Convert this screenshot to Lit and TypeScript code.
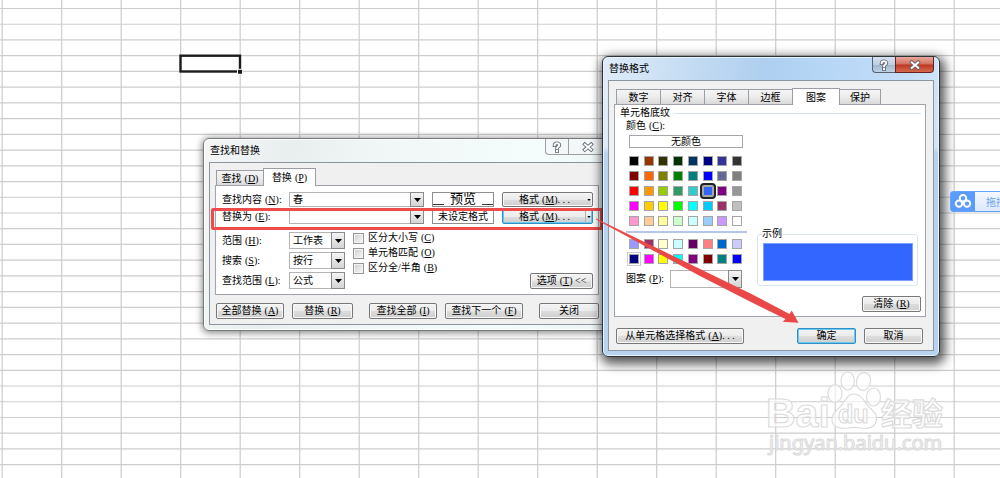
import { LitElement, html, svg, css, nothing } from "lit";
import { customElement, property } from "lit/decorators.js";
import { classMap } from "lit/directives/class-map.js";

const controls = css`
  * { box-sizing: border-box; }
  :host, button, input, select, legend {
    font: 10px/12px "Liberation Serif", "Noto Sans CJK SC", sans-serif;
    color: #000;
  }
  .key { margin-left: 3px; white-space: nowrap; }
  button { padding: 0; margin: 0; }
  .btn {
    height: 16px;
    border: 1px solid #777;
    border-radius: 2px;
    background: linear-gradient(#f3f3f3, #ebebeb 50%, #dddddd 51%, #cfcfcf);
    box-shadow: inset 0 0 0 1px #f8f8f8;
    line-height: 14px;
    text-align: center;
    white-space: nowrap;
  }
  .btn.default { border-color: #2c91c4; box-shadow: inset 0 0 0 1px #6cc8f0; }
  .field { position: relative; display: flex; height: 17px; }
  .field input, .field select {
    appearance: none;
    flex: 1;
    min-width: 0;
    width: 100%;
    margin: 0;
    padding: 0 16px 0 3px;
    border: 1px solid #b4b4b4;
    border-radius: 0;
    background: #fff;
    outline: none;
  }
  .field.low { height: 15px; }
  .drop {
    position: absolute;
    right: 0;
    top: 0;
    bottom: 0;
    width: 14px;
    display: grid;
    place-items: center;
    border: 1px solid #8a8a8a;
    background: linear-gradient(#f4f4f4, #d4d4d4);
    pointer-events: none;
  }
  .drop svg { width: 7px; height: 4px; display: block; }
  .tabs { display: flex; align-items: flex-end; }
  .tab {
    height: 15px;
    border: 1px solid #9a9da6;
    border-bottom: 0;
    border-right-width: 0;
    background: linear-gradient(#f4f4f4, #ececec 50%, #dadada);
    line-height: 15px;
    text-align: center;
    white-space: nowrap;
  }
  .tab:last-child { border-right-width: 1px; }
  .tab.on {
    position: relative;
    height: 18px;
    margin-bottom: -1px;
    border-right-width: 1px;
    background: #fff;
  }
  .panel { border: 1px solid #a0a3ac; background: #fff; }
`;

const key = (k: string, tail = "") => html`<span class="key">(<u>${k}</u>)${tail}</span>`;
const arrow = html`<svg viewBox="0 0 7 4"><path d="M0 0h7L3.5 4z" fill="#000" /></svg>`;

@customElement("spread-sheet")
class SpreadSheet extends LitElement {
  static styles = css`
    :host { display: block; }
    svg { display: block; width: 100%; height: 100%; }
    .line { stroke: #cdcdcd; stroke-width: 1.2; }
    .cursor { fill: none; stroke: #1c1c1c; stroke-width: 2.4; }
  `;

  render() {
    const cols = Array.from({ length: 40 }, (_, i) => 2.2 + i * 59.5);
    const rows = Array.from({ length: 80 }, (_, i) => 8.5 + i * 15.73);
    return html`<svg aria-hidden="true">
      ${cols.map((x) => svg`<line class="line" x1=${x} x2=${x} y1="0" y2="100%" />`)}
      ${rows.map((y) => svg`<line class="line" y1=${y} y2=${y} x1="0" x2="100%" />`)}
      <rect class="cursor" x="180.5" y="55.7" width="59.5" height="15.8" />
      <rect x="237" y="68.8" width="5.5" height="5.5" fill="#fff" />
      <rect x="238" y="69.8" width="4" height="4" fill="#1c1c1c" />
    </svg>`;
  }
}

@customElement("glass-window")
class GlassWindow extends LitElement {
  @property() heading = "";
  @property({ type: Boolean, reflect: true }) active = false;

  static styles = css`
    * { box-sizing: border-box; }
    :host {
      display: block;
      box-sizing: border-box;
      padding: 0 5px 5px;
      border: 1px solid #777b7e;
      border-radius: 6px;
      background: linear-gradient(100deg, #f4f6f6, #e9eeee 20%, #f2f7f7 45%, #f4fcfc 75%, #eef3f3);
      box-shadow: inset 0 0 0 1px #fff, 0 1px 7px 1px #0007;
      font: 10px/12px "Noto Sans CJK SC", sans-serif;
    }
    :host([active]) {
      border-color: #2e3338;
      background:
        linear-gradient(#fff0 90px, #b8d3ef 96px),
        linear-gradient(95deg, #e0ecf8, #c7ddf3 22%, #aecfef 45%, #b6d6f6 60%, #c1dcf8 80%, #d4e8fc);
      box-shadow: inset 0 0 0 1px #e6f4ff, 2px 4px 11px 3px #000a;
    }
    header { display: flex; justify-content: space-between; height: 23px; }
    h2 { margin: 0; padding: 5px 0 0 1px; font: inherit; }
    .buttons { display: flex; height: 16px; }
    button {
      display: grid;
      place-items: center;
      width: 23px;
      padding: 0;
      border: 1px solid #9b9fa3;
      border-top: 0;
      border-right: 0;
      border-radius: 0 0 0 4px;
      background: #f4f7f8;
    }
    button + button { width: 39px; border-right: 1px solid #9b9fa3; border-radius: 0 0 4px 0; }
    :host([active]) button {
      border-color: #56616f;
      background: linear-gradient(#d5e2f0, #bccfe3 50%, #9eb5cd 51%, #bed3e8);
    }
    :host([active]) button + button {
      border-color: #622;
      background: linear-gradient(#e9a89c, #d3705d 48%, #bd3822 52%, #d4694b);
    }
    svg { width: 12px; height: 12px; display: block; }
    .edge { fill: none; stroke: #5d636c; stroke-width: 3.6; stroke-linecap: square; }
    .ink { fill: none; stroke: #fff; stroke-width: 1.9; stroke-linecap: square; }
    .body { border: 1px solid #8b959f; background: #f0f0f0; }
  `;

  render() {
    const q = "M3.6 4.2C3.6 1.6 8.4 1.6 8.4 4C8.4 5.6 6 5.6 6 7.2M6 10v0.2";
    const x = "M2.8 3.4l6.4 5.4M9.2 3.4L2.8 8.8";
    const icon = (d: string) => html`<svg viewBox="0 0 12 12"><path class="edge" d=${d} /><path class="ink" d=${d} /></svg>`;
    return html`
      <header>
        <h2>${this.heading}</h2>
        <div class="buttons">
          <button aria-label="帮助">${icon(q)}</button>
          <button aria-label="关闭窗口">${icon(x)}</button>
        </div>
      </header>
      <div class="body"><slot></slot></div>
    `;
  }
}

@customElement("find-replace")
class FindReplace extends LitElement {
  static styles = [
    controls,
    css`
      :host { display: block; padding: 5px 7px 5px 5px; }
      .tab { width: 47px; margin-left: 1px; }
      .tab.on { width: 53px; margin-left: 0; }
      .panel { padding: 6px 5px 5px 6px; }
      .query {
        display: grid;
        grid-template-columns: 67px 1fr 62px 91px;
        gap: 2px 8px;
        align-items: center;
      }
      .query label { margin-right: -8px; white-space: nowrap; }
      .query .field { margin-left: -8px; }
      .preview {
        height: 15px;
        border: 1px solid #8d8d8d;
        line-height: 14px;
        text-align: center;
        white-space: nowrap;
      }
      .big { display: flex; align-items: flex-end; gap: 6px; font-size: 13px; }
      .big::before, .big::after { content: ""; flex: 1; border-bottom: 1px solid #333; margin-bottom: 1px; }
      .format { position: relative; height: 15px; line-height: 13px; padding-right: 6px; }
      .format .mark {
        position: absolute;
        right: 0;
        top: 1px;
        bottom: 1px;
        width: 7px;
        display: grid;
        place-items: center;
      }
      .format.default .mark { border-left: 1px solid #a5b5bd; }
      .mark svg { width: 4px; height: 2px; }
      .lower { display: flex; margin-top: 8px; }
      .scope { display: grid; grid-template-columns: 67px 56px; gap: 3px 0; align-items: center; }
      .checks { display: flex; flex-direction: column; gap: 3px; margin-left: 8px; }
      .checks label { display: flex; align-items: center; gap: 4px; height: 12px; white-space: nowrap; }
      .checks input {
        appearance: none;
        width: 11px;
        height: 11px;
        margin: 0;
        border: 1px solid #979797;
        background: linear-gradient(135deg, #c9cdd0, #fafafa);
        box-shadow: inset 0 0 0 1px #f4f4f4;
      }
      .options { width: 63px; margin: auto 0 0 auto; }
      .actions { display: flex; gap: 16px; margin: 8px 0 0 1px; }
      .pair { display: flex; gap: 8px; }
      .w60 { width: 61px; }
      .w68 { width: 68px; }
      .w78 { width: 78px; }
    `,
  ];

  private query(id: string, label: string, k: string, value: string, preview: unknown, on: boolean) {
    return html`
      <label for=${id}>${label}${key(k, ":")}</label>
      <div class="field low"><input id=${id} .value=${value} /><span class="drop">${arrow}</span></div>
      ${preview}
      <button class=${classMap({ btn: true, format: true, default: on })}>
        格式${key("M", ". . .")}<span class="mark">${arrow}</span>
      </button>
    `;
  }

  private scope(id: string, label: string, k: string, value: string) {
    return html`
      <label for=${id}>${label}${key(k, ":")}</label>
      <div class="field"><select id=${id}><option>${value}</option></select><span class="drop">${arrow}</span></div>
    `;
  }

  render() {
    return html`
      <div class="tabs" role="tablist">
        <button class="tab" role="tab">查找${key("D")}</button>
        <button class="tab on" role="tab" aria-selected="true">替换${key("P")}</button>
      </div>
      <div class="panel">
        <div class="query">
          ${this.query("find", "查找内容", "N", "春", html`<div class="preview big">预览</div>`, false)}
          ${this.query("repl", "替换为", "E", "", html`<div class="preview">未设定格式</div>`, true)}
        </div>
        <div class="lower">
          <div class="scope">
            ${this.scope("within", "范围", "H", "工作表")}
            ${this.scope("order", "搜索", "S", "按行")}
            ${this.scope("look", "查找范围", "L", "公式")}
          </div>
          <div class="checks">
            <label><input type="checkbox" /><span>区分大小写${key("C")}</span></label>
            <label><input type="checkbox" /><span>单元格匹配${key("O")}</span></label>
            <label><input type="checkbox" /><span>区分全/半角${key("B")}</span></label>
          </div>
          <button class="btn options">选项${key("T", " <<")}</button>
        </div>
      </div>
      <div class="actions">
        <div class="pair">
          <button class="btn w68">全部替换${key("A")}</button>
          <button class="btn w60">替换${key("R")}</button>
        </div>
        <div class="pair">
          <button class="btn w68">查找全部${key("I")}</button>
          <button class="btn w78">查找下一个${key("F")}</button>
        </div>
        <button class="btn w60">关闭</button>
      </div>
    `;
  }
}

const PALETTE = `000000 993300 333300 003300 003366 000080 333399 333333
  800000 ff6600 808000 008000 008080 0000ff 666699 808080
  ff0000 ff9900 99cc00 339966 33cccc 3366ff 800080 969696
  ff00ff ffcc00 ffff00 00ff00 00ffff 00ccff 993366 c0c0c0
  ff99cc ffcc99 ffff99 ccffcc ccffff 99ccff cc99ff ffffff`.split(/\s+/);
const CHART = `9999ff 993366 ffffcc ccffff 660066 ff8080 0066cc ccccff
  000080 ff00ff ffff00 00ffff 800080 800000 008080 0000ff`.split(/\s+/);

@customElement("cell-format")
class CellFormat extends LitElement {
  static styles = [
    controls,
    css`
      :host { display: block; padding: 7px 7px 6px 5px; }
      .tabs { padding-left: 2px; }
      .tab { width: 44px; }
      .tab.on { width: 48px; height: 17px; }
      .tab:last-child { width: 41px; border-left: 0; }
      .panel { padding: 2px 4px 4px 5px; }
      .title { display: flex; align-items: center; gap: 4px; }
      .title::after { content: ""; flex: 1; border-top: 1px solid #d6e2ee; }
      .columns {
        display: grid;
        grid-template-columns: 121px 1fr;
        column-gap: 10px;
        padding-left: 6px;
      }
      .label { margin: 1px 0 3px; }
      .none {
        display: block;
        width: 114px;
        height: 13px;
        margin-left: 3px;
        border: 1px solid #a6a6a6;
        background: #fff;
        line-height: 12px;
      }
      .swatches {
        display: grid;
        grid-template-columns: repeat(8, 10px);
        justify-content: space-between;
        row-gap: 5px;
        margin: 8px 5px 5px 3px;
      }
      .swatch { width: 10px; height: 10px; border: 1px solid #a5a5a5; }
      .swatch.on { outline: 2px solid #222; outline-offset: 1px; border-radius: 1px; box-shadow: 0 0 0 2px #aaa; }
      .swatch.ring { outline: 1px solid #ccc; outline-offset: 1px; }
      hr { height: 2px; margin: 0; border: 0; background: #b4c7ea; }
      .chart { margin-top: 6px; margin-bottom: 6px; }
      .pattern { display: grid; grid-template-columns: 44px 72px; align-items: center; margin-bottom: 24px; }
      .pattern .field { height: 18px; }
      .side { align-self: end; }
      fieldset {
        margin: 0 3px 10px 0;
        padding: 3px 4px 4px 5px;
        border: 1px solid #dbe5ee;
        border-radius: 3px;
        min-width: 0;
      }
      legend { margin-left: -1px; padding: 0; background: #fff; }
      .sample { height: 38px; background: #3366ff; border: 1px solid #7da0ff; }
      .clear { display: block; width: 59px; margin-left: auto; }
      .actions { display: flex; gap: 8px; margin: 11px 3px 0 2px; }
      .w59 { width: 59px; }
      .pick { width: 128px; margin-right: auto; }
    `,
  ];

  private swatches(list: string[], picked: number, chart = false) {
    return html`<div class=${classMap({ swatches: true, chart })}>
      ${list.map(
        (c, i) => html`<button
          class=${classMap({ swatch: true, on: !chart && i === picked, ring: chart && i === picked })}
          style="background:#${c}"
          aria-label="#${c}"
          aria-pressed=${i === picked && !chart ? "true" : nothing}
        ></button>`
      )}
    </div>`;
  }

  render() {
    return html`
      <div class="tabs" role="tablist">
        ${["数字", "对齐", "字体", "边框", "图案", "保护"].map(
          (t) => html`<button role="tab" class=${classMap({ tab: true, on: t === "图案" })}>${t}</button>`
        )}
      </div>
      <div class="panel">
        <div class="title">单元格底纹</div>
        <div class="columns">
          <div>
            <div class="label">颜色${key("C", ":")}</div>
            <button class="none">无颜色</button>
            ${this.swatches(PALETTE, 21)}
            <hr />
            ${this.swatches(CHART, 8, true)}
            <div class="pattern">
              <label for="pattern">图案${key("P", ":")}</label>
              <div class="field"><select id="pattern"><option></option></select><span class="drop">${arrow}</span></div>
            </div>
          </div>
          <div class="side">
            <fieldset>
              <legend>示例</legend>
              <div class="sample"></div>
            </fieldset>
            <button class="btn clear">清除${key("R")}</button>
          </div>
        </div>
      </div>
      <div class="actions">
        <button class="btn pick">从单元格选择格式${key("A", ". . .")}</button>
        <button class="btn default w59">确定</button>
        <button class="btn w59">取消</button>
      </div>
    `;
  }
}

@customElement("app-root")
class AppRoot extends LitElement {
  static styles = css`
    :host {
      position: relative;
      display: block;
      height: 100vh;
      overflow: hidden;
      background: #fff;
    }
    spread-sheet { height: 100%; }
    .replace { position: absolute; left: 203px; top: 138px; width: 410px; }
    .format { position: absolute; left: 602px; top: 56px; width: 338px; }
    .frame {
      position: absolute;
      left: 211px;
      top: 208px;
      width: 392px;
      height: 22px;
      box-sizing: border-box;
      border: 3px solid #ee4b4b;
      border-radius: 2px;
      pointer-events: none;
    }
    .pointer { position: absolute; left: 594px; top: 216px; width: 210px; height: 112px; pointer-events: none; }
    .upload {
      position: absolute;
      left: 950px;
      top: 191px;
      display: flex;
      align-items: center;
      height: 21px;
      box-sizing: border-box;
      border: 1px solid #66a3fb;
      border-radius: 3px;
      background: linear-gradient(#f4f8ff, #dce9fd);
      color: #6d9ff2;
      font: 10px/12px "Noto Sans CJK SC", sans-serif;
      text-decoration: none;
      white-space: nowrap;
    }
    .upload svg { width: 24px; height: 19px; background: #5b9bfc; margin-right: 11px; }
    .mark { position: absolute; left: 760px; top: 365px; width: 200px; height: 100px; pointer-events: none; }
    .ghost { fill: #fff; fill-opacity: 0.6; stroke: #dcdcdc; stroke-width: 1.2; }
    .latin { font: bold 41px "Liberation Sans", sans-serif; }
    .du { font: bold 25px "Liberation Sans", sans-serif; }
    .han { font: bold 31px "Noto Sans CJK SC", sans-serif; }
    .site { font: 20px "Noto Sans", sans-serif; }
  `;

  render() {
    return html`
      <spread-sheet></spread-sheet>
      <glass-window class="replace" heading="查找和替换"><find-replace></find-replace></glass-window>
      <div class="frame"></div>
      <glass-window class="format" heading="替换格式" active><cell-format></cell-format></glass-window>
      <svg class="pointer" viewBox="594 216 210 112" aria-hidden="true">
        <path d="M596 218.5L750 293.2L789.5 314L791.7 310.5L798.5 322.7L782.7 321.7L785.5 319L748 300.5L700 276L596 219.5z" fill="#ea4747" />
      </svg>
      <svg class="mark" viewBox="760 365 200 100">
        <text class="ghost latin" x="766" y="427">Bai</text>
        <g class="ghost">
          <ellipse cx="835" cy="393.5" rx="7" ry="9" />
          <ellipse cx="847.7" cy="381" rx="6.7" ry="9" />
          <ellipse cx="863.5" cy="381.5" rx="7" ry="9" transform="rotate(10 863.5 381.5)" />
          <ellipse cx="873.5" cy="397" rx="7" ry="9" />
          <path d="M854 394C861 394 864 401 869 407C875 412 878 416 876 422C874 428 868 429 861 428C856 427 852 427 847 428C839 429 833 427 832 421C831 415 835 412 840 407C845 402 847 394 854 394z" />
        </g>
        <text class="ghost du" x="838" y="423">du</text>
        <text class="ghost han" x="881" y="425">经验</text>
        <text class="ghost site" x="769" y="450">jingyan.baidu.com</text>
      </svg>
      <a class="upload" href="#">
        <svg viewBox="0 0 24 19" aria-hidden="true">
          <g fill="none" stroke="#fff" stroke-width="2">
            <circle cx="12" cy="6.3" r="3.2" />
            <circle cx="8" cy="11.6" r="3.2" />
            <circle cx="16" cy="11.6" r="3.2" />
          </g>
        </svg>拖拽上传
      </a>
    `;
  }
}
